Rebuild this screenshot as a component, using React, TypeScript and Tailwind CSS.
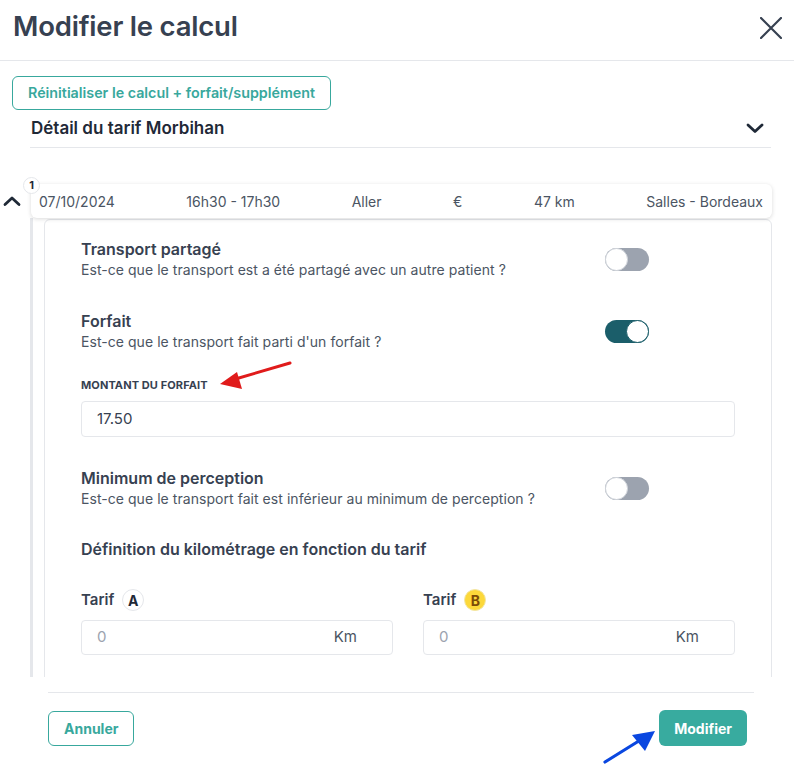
import React from "react";

function Toggle({ on }: { on: boolean }) {
  return (
    <div
      className={`relative w-[44px] h-[23px] rounded-full shrink-0 ${on ? "bg-[#1b5e6a]" : "bg-[#9ca3af]"}`}
    >
      <div
        className={`absolute top-0 w-[23px] h-[23px] rounded-full bg-white border ${on ? "right-0 border-[#1b5e6a]" : "left-0 border-[#d1d5db]"}`}
      />
    </div>
  );
}

function OptionRow({ title, desc, on }: { title: string; desc: string; on: boolean }) {
  return (
    <div className="flex items-center">
      <div className="flex-1">
        <div className="text-[16px] leading-[22px] font-semibold text-[#374151]">{title}</div>
        <div className="text-[14px] leading-[20px] text-[#4b5563] tracking-[0.05px]">{desc}</div>
      </div>
      <div className="mr-[86px]">
        <Toggle on={on} />
      </div>
    </div>
  );
}

export default function App() {
  return (
    <div
      className="relative w-[794px] h-[764px] bg-white overflow-hidden"
      style={{ fontFamily: "Inter, 'Noto Sans', sans-serif" }}
    >
      {/* Header */}
      <div className="h-[61px] border-b border-[#e5e7eb] flex items-center justify-between pl-[13px] pr-[12px] pb-[6px]">
        <div className="text-[27.5px] font-semibold text-[#374151] tracking-[-0.2px]">Modifier le calcul</div>
        <svg width="22" height="22" viewBox="0 0 22 22" className="mt-[1px]">
          <path d="M1 1 L21 21 M21 1 L1 21" stroke="#374151" strokeWidth="2.2" strokeLinecap="round" />
        </svg>
      </div>

      {/* Body */}
      <div className="h-[616px] overflow-hidden">
        <div className="pl-[12px] pt-[15px]">
          <div className="inline-flex items-center h-[34px] px-[15px] border border-[#38a89d] rounded-[6px] text-[14.3px] font-semibold text-[#38a89d]">
            Réinitialiser le calcul + forfait/supplément
          </div>
        </div>
        <div className="ml-[30px] mr-[23px] h-[38px] border-b border-[#e5e7eb] flex items-center justify-between pl-[1px]">
          <div className="text-[17px] font-semibold text-[#1f2937]">Détail du tarif Morbihan</div>
          <svg width="18" height="12" viewBox="0 0 18 12" className="mr-[7px] mt-[-2px]">
            <path d="M2 3 L9 9.5 L16 3" stroke="#1f2937" strokeWidth="2.8" fill="none" strokeLinecap="round" strokeLinejoin="round" />
          </svg>
        </div>

        {/* Ride row */}
        <div className="relative mt-[36px] flex items-center">
          <div className="w-[31px] flex justify-center">
            <svg width="18" height="12" viewBox="0 0 18 12" className="ml-[-7px]">
              <path d="M2 9.5 L9 3 L16 9.5" stroke="#1f2937" strokeWidth="2.8" fill="none" strokeLinecap="round" strokeLinejoin="round" />
            </svg>
          </div>
          <div className="relative w-[741px] h-[34px] rounded-[6px] bg-white shadow-[0_1px_4px_rgba(0,0,0,0.15)] flex items-center justify-between pl-[8px] pr-[9px] text-[14px] text-[#4b5563]">
            <div className="absolute left-[-8px] top-[-7px] w-[17px] h-[17px] rounded-full bg-white border border-[#e5e7eb] flex items-center justify-center text-[11px] font-bold text-[#1f2937] leading-none">
              1
            </div>
            <span>07/10/2024</span>
            <span>16h30 - 17h30</span>
            <span>Aller</span>
            <span>€</span>
            <span>47 km</span>
            <span>Salles - Bordeaux</span>
          </div>
        </div>

        {/* Expanded content */}
        <div className="flex">
          <div className="ml-[30px] w-[3px] bg-[#e5e7eb] h-[500px] shrink-0" />
          <div className="ml-[11px] w-[728px] mt-[1px] border border-[#e5e7eb] rounded-t-[6px] pl-[36px] pr-[36px] pt-[18px] h-[600px]">
            <OptionRow
              title="Transport partagé"
              desc="Est-ce que le transport est a été partagé avec un autre patient ?"
              on={false}
            />
            <div className="mt-[30px]">
              <OptionRow title="Forfait" desc="Est-ce que le transport fait parti d'un forfait ?" on={true} />
            </div>
            <div className="mt-[25px] text-[11px] leading-[16px] font-bold text-[#374151] tracking-[0.1px]">
              MONTANT DU FORFAIT
            </div>
            <div className="mt-[8px] h-[36px] border border-[#e5e7eb] rounded-[4px] flex items-center pl-[15px] text-[15px] text-[#374151]">
              17.50
            </div>
            <div className="mt-[30px]">
              <OptionRow
                title="Minimum de perception"
                desc="Est-ce que le transport fait est inférieur au minimum de perception ?"
                on={false}
              />
            </div>
            <div className="mt-[29px] text-[16px] leading-[22px] font-semibold text-[#374151]">
              Définition du kilométrage en fonction du tarif
            </div>
            <div className="mt-[29px] grid grid-cols-2 gap-[30px]">
              <div>
                <div className="flex items-center h-[22px] gap-[8px]">
                  <span className="text-[15px] font-semibold text-[#374151]">Tarif</span>
                  <span className="w-[22px] h-[22px] rounded-full border border-[#e5e7eb] flex items-center justify-center text-[14px] font-bold text-[#1f2937]">
                    A
                  </span>
                </div>
                <div className="mt-[9px] h-[35px] border border-[#e5e7eb] rounded-[4px] flex items-center justify-between pl-[15px] pr-[35px] text-[15px]">
                  <span className="text-[#9ca3af]">0</span>
                  <span className="text-[#4b5563]">Km</span>
                </div>
              </div>
              <div>
                <div className="flex items-center h-[22px] gap-[8px]">
                  <span className="text-[15px] font-semibold text-[#374151]">Tarif</span>
                  <span className="w-[22px] h-[22px] rounded-full bg-[#fcd83a] border border-[#f3e6a3] flex items-center justify-center text-[14px] font-bold text-[#7a4a06]">
                    B
                  </span>
                </div>
                <div className="mt-[9px] h-[35px] border border-[#e5e7eb] rounded-[4px] flex items-center justify-between pl-[15px] pr-[35px] text-[15px]">
                  <span className="text-[#9ca3af]">0</span>
                  <span className="text-[#4b5563]">Km</span>
                </div>
              </div>
            </div>
          </div>
        </div>
      </div>

      {/* Footer */}
      <div className="ml-[48px] mr-[40px] mt-[15px] border-t border-[#e5e7eb]" />
      <div className="flex items-center justify-between pl-[48px] pr-[47px] mt-[17px]">
        <div className="h-[35px] px-[15px] border border-[#38a89d] rounded-[6px] flex items-center text-[14px] font-bold text-[#38a89d]">
          Annuler
        </div>
        <div className="h-[36px] px-[15px] bg-[#38ab9f] rounded-[6px] flex items-center text-[14px] font-bold text-white">
          Modifier
        </div>
      </div>

      {/* Annotation arrows */}
      <svg className="absolute left-0 top-0 pointer-events-none" width="794" height="764" viewBox="0 0 794 764">
        <line x1="290" y1="363" x2="232" y2="380" stroke="#e01b1b" strokeWidth="3" strokeLinecap="round" />
        <polygon points="220,384 237,372 242,389" fill="#e01b1b" />
        <line x1="605" y1="762" x2="642" y2="739" stroke="#0a47e0" strokeWidth="3.2" strokeLinecap="round" />
        <polygon points="655,731 632,735 645,751" fill="#0a47e0" />
      </svg>
    </div>
  );
}
